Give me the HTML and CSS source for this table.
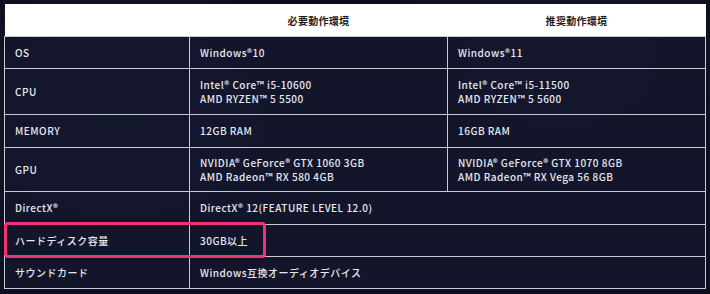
FILE: index.html
```html
<!DOCTYPE html>
<html lang="ja">
<head>
<meta charset="utf-8">
<title>動作環境</title>
<link rel="stylesheet" href="styles.css">
</head>
<body>
<div class="spec">
  <table class="spec-table">
    <thead>
      <tr>
        <th><div class="head"></div></th>
        <th><div class="head">必要動作環境</div></th>
        <th><div class="head">推奨動作環境</div></th>
      </tr>
    </thead>
    <tbody>
      <tr>
        <td><div class="cell">OS</div></td>
        <td><div class="cell">Windows®10</div></td>
        <td><div class="cell">Windows®11</div></td>
      </tr>
      <tr>
        <td><div class="cell tall">CPU</div></td>
        <td><div class="cell tall"><span>Intel® Core™ i5-10600</span><span>AMD RYZEN™ 5 5500</span></div></td>
        <td><div class="cell tall"><span>Intel® Core™ i5-11500</span><span>AMD RYZEN™ 5 5600</span></div></td>
      </tr>
      <tr>
        <td><div class="cell wide">MEMORY</div></td>
        <td><div class="cell wide">12GB RAM</div></td>
        <td><div class="cell wide">16GB RAM</div></td>
      </tr>
      <tr>
        <td><div class="cell tall2">GPU</div></td>
        <td><div class="cell tall2"><span>NVIDIA® GeForce® GTX 1060 3GB</span><span>AMD Radeon™ RX 580 4GB</span></div></td>
        <td><div class="cell tall2"><span>NVIDIA® GeForce® GTX 1070 8GB</span><span>AMD Radeon™ RX Vega 56 8GB</span></div></td>
      </tr>
      <tr>
        <td><div class="cell wide">DirectX®</div></td>
        <td colspan="2"><div class="cell wide">DirectX® 12(FEATURE LEVEL 12.0)</div></td>
      </tr>
      <tr>
        <td><div class="cell">ハードディスク容量</div></td>
        <td colspan="2"><div class="cell">30GB以上</div></td>
      </tr>
      <tr>
        <td><div class="cell">サウンドカード</div></td>
        <td colspan="2"><div class="cell">Windows互換オーディオデバイス</div></td>
      </tr>
    </tbody>
  </table>
  <div class="highlight"></div>
</div>
</body>
</html>
```

FILE: styles.css
```css
html, body {
  margin: 0;
  padding: 0;
}
body {
  background-color: #0e1020;
  background-image:
    radial-gradient(ellipse 300px 200px at 120px 120px, rgba(60, 70, 110, 0.18), transparent 70%),
    radial-gradient(ellipse 260px 180px at 560px 60px, rgba(60, 70, 110, 0.12), transparent 70%);
  width: 710px;
  height: 294px;
  overflow: hidden;
  font-family: "Noto Sans CJK JP", "Noto Sans", sans-serif;
}
.spec {
  position: relative;
  margin: 4px 0 0 4px;
  width: 702px;
}
.spec-table {
  width: 702px;
  border-collapse: collapse;
  table-layout: fixed;
  background: rgba(20, 23, 44, 0.92);
  color: #e8e9ef;
  font-size: 10px;
  font-weight: 500;
  letter-spacing: 0.05em;
}
.spec-table th:nth-child(1) { width: 185px; }
.spec-table th:nth-child(2) { width: 258px; }
.spec-table th {
  background: #ffffff;
  padding: 0;
  border: none;
  border-bottom: 1px solid #c9cbd3;
}
.head {
  height: 32px;
  display: flex;
  align-items: center;
  justify-content: center;
  color: #1c1d24;
  font-weight: 700;
  font-size: 10px;
  letter-spacing: 0.03em;
}
.spec-table td {
  border: 1px solid #c9cbd3;
  padding: 0 10px;
  text-align: left;
}
.cell {
  height: 31px;
  display: flex;
  flex-direction: column;
  justify-content: center;
  line-height: 14px;
  white-space: nowrap;
}
.cell.wide { height: 32px; }
.cell.tall { height: 45px; }
.cell.tall2 { height: 43px; }
.highlight {
  position: absolute;
  left: 0;
  top: 218px;
  width: 262px;
  height: 36px;
  box-sizing: border-box;
  border: 3px solid #ee3371;
  border-radius: 4px;
  pointer-events: none;
}
```
